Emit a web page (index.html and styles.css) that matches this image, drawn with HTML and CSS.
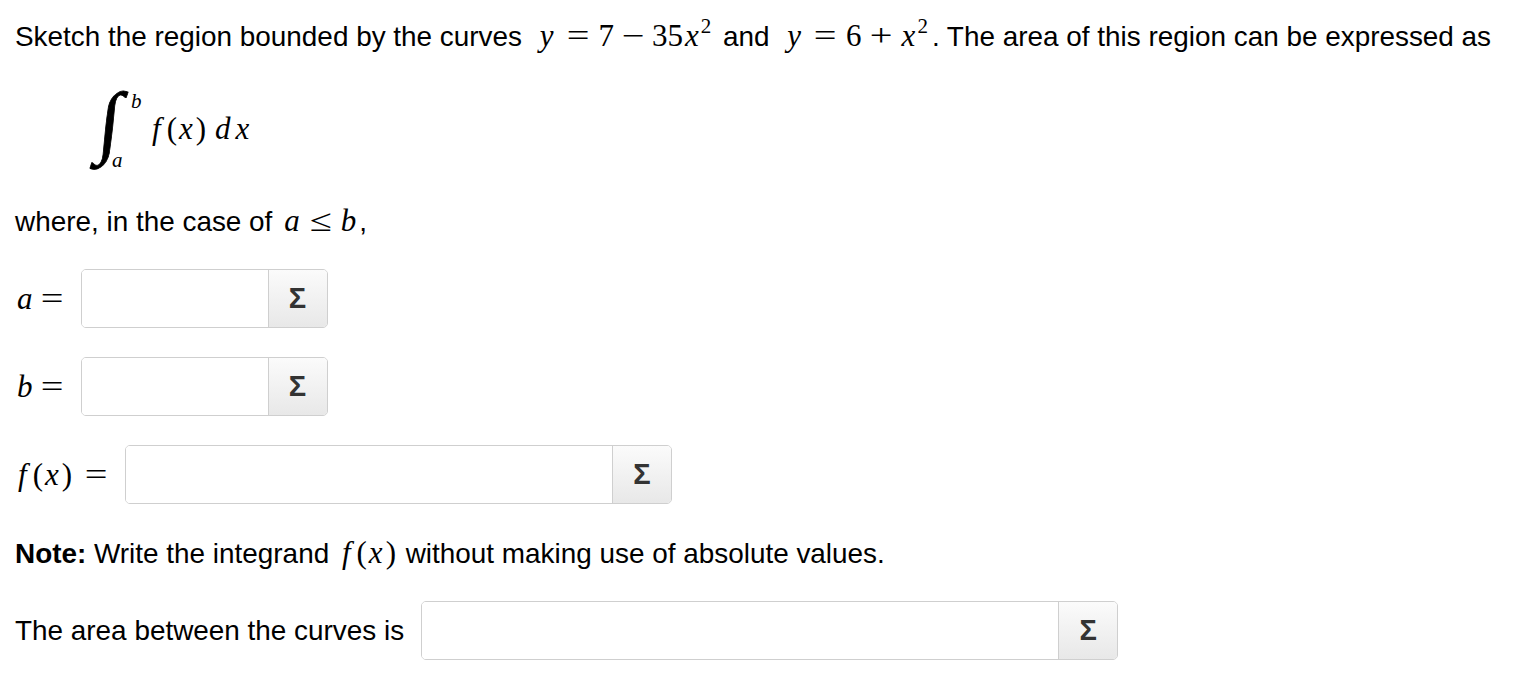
FILE: index.html
```html
<!DOCTYPE html>
<html>
<head>
<meta charset="utf-8">
<link rel="stylesheet" href="styles.css">
</head>
<body>
<div class="q">
  <div class="line1">Sketch the region bounded by the curves <span class="m"><i>y</i><span class="rel">=</span>7<span class="bin">−</span>35<i>x</i><sup>2</sup></span> and <span class="m"><i>y</i><span class="rel">=</span>6<span class="bin">+</span><i>x</i><sup>2</sup></span>. The area of this region can be expressed as</div>

  <div class="integral">
    <span class="int-sign">∫</span>
    <span class="lim-b">b</span>
    <span class="lim-a">a</span>
    <span class="integrand m"><i class="f">f</i>(<i>x</i>)<span class="thin"></span><i>d</i><i>x</i></span>
  </div>

  <div class="where">where, in the case of <span class="m"><i>a</i><span class="rel">≤</span><i>b</i></span>,</div>

  <div class="row row-a">
    <span class="label m"><i>a</i><span class="rel last">=</span></span>
    <div class="field field-sm"><div class="input"></div><div class="sigma">Σ</div></div>
  </div>

  <div class="row row-b">
    <span class="label m"><i>b</i><span class="rel last">=</span></span>
    <div class="field field-sm"><div class="input"></div><div class="sigma">Σ</div></div>
  </div>

  <div class="row row-f">
    <span class="label m"><i class="f">f</i>(<i>x</i>)<span class="rel last">=</span></span>
    <div class="field field-md"><div class="input"></div><div class="sigma">Σ</div></div>
  </div>

  <div class="note"><b>Note:</b> Write the integrand <span class="m"><i class="f">f</i>(<i>x</i>)</span> without making use of absolute values.</div>

  <div class="row row-area">
    <span class="label">The area between the curves is</span>
    <div class="field field-lg"><div class="input"></div><div class="sigma">Σ</div></div>
  </div>
</div>
</body>
</html>
```
FILE: styles.css
```css
html, body {
  margin: 0;
  padding: 0;
  background: #fff;
}

body {
  font-family: "Liberation Sans", Arial, sans-serif;
  font-size: 27.9px;
  color: #000;
}

.q {
  padding: 20px 15px 0 15px;
  display: flex;
  flex-direction: column;
}

.line1 {
  line-height: 32px;
  height: 32px;
  white-space: nowrap;
}

.m {
  font-family: "Liberation Serif", "Times New Roman", serif;
  font-size: 31px;
  white-space: nowrap;
}

.m i {
  font-style: italic;
  margin: 0 3px 0 2px;
}

.m i.f {
  margin: 0 6px 0 3px;
}

.m sup {
  font-size: 21px;
  line-height: 0;
  vertical-align: 13px;
  margin-left: -1px;
}

.rel,
.bin {
  display: inline-block;
  width: 24px;
  text-align: center;
  transform: scaleX(1.3);
}

.rel {
  margin: 0 9px;
}

.rel.last {
  margin-right: 0;
}

.bin {
  margin: 0 7px;
}

.line1 .m {
  margin-left: 8px;
  margin-right: 4px;
}

.integral {
  position: relative;
  height: 100px;
  margin-top: 28px;
  font-family: "Liberation Serif", "Times New Roman", serif;
}

.int-sign {
  position: absolute;
  left: 84px;
  top: -9px;
  font-size: 80px;
  line-height: 100px;
  font-style: italic;
  transform: skewX(-6deg);
  -webkit-text-stroke: 0.8px #000;
}

.lim-b {
  position: absolute;
  left: 116px;
  top: 11px;
  font-size: 21px;
  font-style: italic;
  line-height: 20px;
}

.lim-a {
  position: absolute;
  left: 97px;
  top: 70px;
  font-size: 21px;
  font-style: italic;
  line-height: 20px;
}

.integrand {
  position: absolute;
  left: 134px;
  top: 31px;
  line-height: 36px;
}

.thin {
  display: inline-block;
  width: 7px;
}

.where {
  margin-top: 25px;
  line-height: 32px;
  height: 32px;
  white-space: nowrap;
}

.where .m {
  margin-left: 2px;
}

.where .rel {
  margin: 0 6px;
}

.row {
  display: flex;
  align-items: center;
  gap: 17px;
  height: 59px;
}

.row-a { margin-top: 32px; }
.row-b { margin-top: 29px; }
.row-f { margin-top: 29px; }
.row-area { margin-top: 32px; }

.label .rel {
  margin-left: 4px;
}

.row-f .label .rel {
  margin-left: 12px;
}

.field {
  display: flex;
  height: 59px;
  box-sizing: border-box;
  border: 1px solid #cfcfcf;
  border-radius: 5px;
  overflow: hidden;
  background: #fff;
}

.field-sm { width: 247px; }
.field-md { width: 547px; }
.field-lg { width: 697px; }

.input {
  flex: 1;
  background: #fff;
}

.sigma {
  width: 58px;
  flex: none;
  border-left: 1px solid #cfcfcf;
  background: linear-gradient(#fbfbfb, #e8e8e8);
  display: flex;
  align-items: center;
  justify-content: center;
  font-family: "Liberation Sans", Arial, sans-serif;
  font-weight: bold;
  font-size: 29px;
  color: #333;
}

.note {
  margin-top: 33px;
  line-height: 32px;
  height: 32px;
  white-space: nowrap;
}

.note .m {
  margin: 0 2px;
}
```
